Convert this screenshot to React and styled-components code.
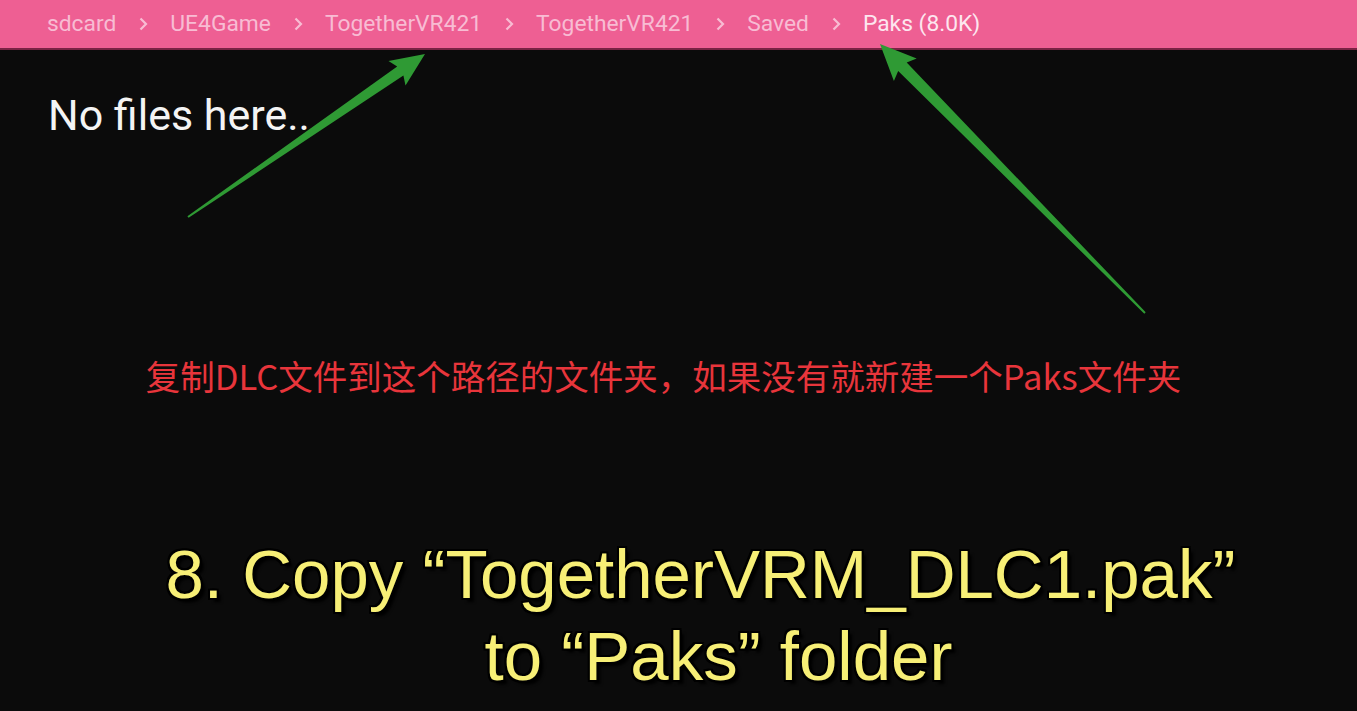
import React from 'react';
import styled, { createGlobalStyle } from 'styled-components';

const Global = createGlobalStyle`
    html, body {
        margin: 0;
        padding: 0;
        background: #0b0b0b;
    }
    #root {
        min-height: 711px;
    }
`;

const Page = styled.div`
    position: relative;
    width: 1357px;
    height: 711px;
    overflow: hidden;
    background: #0b0b0b;
    display: flex;
    flex-direction: column;
`;

const Bar = styled.div`
    height: 48px;
    background: #ee5f93;
    border-bottom: 2px solid #7a2344;
    display: flex;
    align-items: center;
    padding-left: 47px;
    gap: 19px;
    font-family: Roboto, "Noto Sans", sans-serif;
    font-size: 22.8px;
`;

const Crumb = styled.span`
    color: ${props => props.current ? "#fde6ef" : "#f8bcd3"};
    line-height: 1;
`;

const Chevron = styled.svg`
    width: 16px;
    height: 16px;
    flex: none;
`;

const Empty = styled.div`
    margin: 40px 0 0 48px;
    font-family: Roboto, "Noto Sans", sans-serif;
    font-size: 43px;
    line-height: 50px;
    color: #f4f4f4;
`;

const Note = styled.div`
    margin-top: 210px;
    padding-right: 30px;
    text-align: center;
    font-family: "Noto Sans CJK SC", "Noto Sans", sans-serif;
    font-size: 34.5px;
    line-height: 50px;
    color: #e8353b;
`;

const Caption = styled.div`
    margin-top: 134px;
    font-family: "Liberation Sans", Arial, sans-serif;
    font-size: 69px;
    line-height: 82px;
    color: #f7ef76;
    text-shadow:
        2px 0 0 #000, -2px 0 0 #000, 0 2px 0 #000, 0 -2px 0 #000,
        2px 2px 0 #000, -2px -2px 0 #000, 2px -2px 0 #000, -2px 2px 0 #000,
        4px 4px 3px #000;
`;

const CaptionLine = styled.div`
    text-align: center;
    white-space: nowrap;
    padding-left: ${props => props.shift}px;
`;

const Overlay = styled.svg`
    position: absolute;
    left: 0;
    top: 0;
    pointer-events: none;
`;

const crumbs = ["sdcard", "UE4Game", "TogetherVR421", "TogetherVR421", "Saved"];

// tapered annotation arrow from tail to tip
const arrowPoints = (tail, tip, headLen, headW, shaftW, tailW) => {
    const dx = tip[0] - tail[0];
    const dy = tip[1] - tail[1];
    const len = Math.hypot(dx, dy);
    const d = [dx / len, dy / len];
    const n = [-d[1], d[0]];
    const base = [tip[0] - d[0] * headLen, tip[1] - d[1] * headLen];
    const at = (p, w, back = 0) => [p[0] + n[0] * w / 2 - d[0] * back, p[1] + n[1] * w / 2 - d[1] * back];
    const pts = [
        at(tail, tailW),
        at(base, shaftW),
        at(base, headW, 4),
        tip,
        at(base, -headW, 4),
        at(base, -shaftW),
        at(tail, -tailW),
    ];
    return pts.map(p => p.map(v => v.toFixed(1)).join(",")).join(" ");
};

const App = () => {
    return (
        <Page>
            <Global />
            <Bar>
                {crumbs.map((c, i) => (
                    <React.Fragment key={i}>
                        <Crumb>{c}</Crumb>
                        <Chevron viewBox="0 0 16 16">
                            <path d="M5.5 2.5 L11 8 L5.5 13.5" fill="none" stroke="#f8bcd3" strokeWidth="2.2" />
                        </Chevron>
                    </React.Fragment>
                ))}
                <Crumb current>Paks (8.0K)</Crumb>
            </Bar>
            <Empty>No files here..</Empty>
            <Note>复制DLC文件到这个路径的文件夹，如果没有就新建一个Paks文件夹</Note>
            <Caption>
                <CaptionLine shift={44}>8. Copy “TogetherVRM_DLC1.pak”</CaptionLine>
                <CaptionLine shift={80}>to “Paks” folder</CaptionLine>
            </Caption>
            <Overlay width="1357" height="711" viewBox="0 0 1357 711">
                <polygon points={arrowPoints([188, 217], [425, 54], 30, 30, 11, 2)} fill="#2f9a34" />
                <polygon points={arrowPoints([1145, 313], [880, 44], 32, 32, 12, 2)} fill="#2f9a34" />
            </Overlay>
        </Page>
    );
};

export default App;
